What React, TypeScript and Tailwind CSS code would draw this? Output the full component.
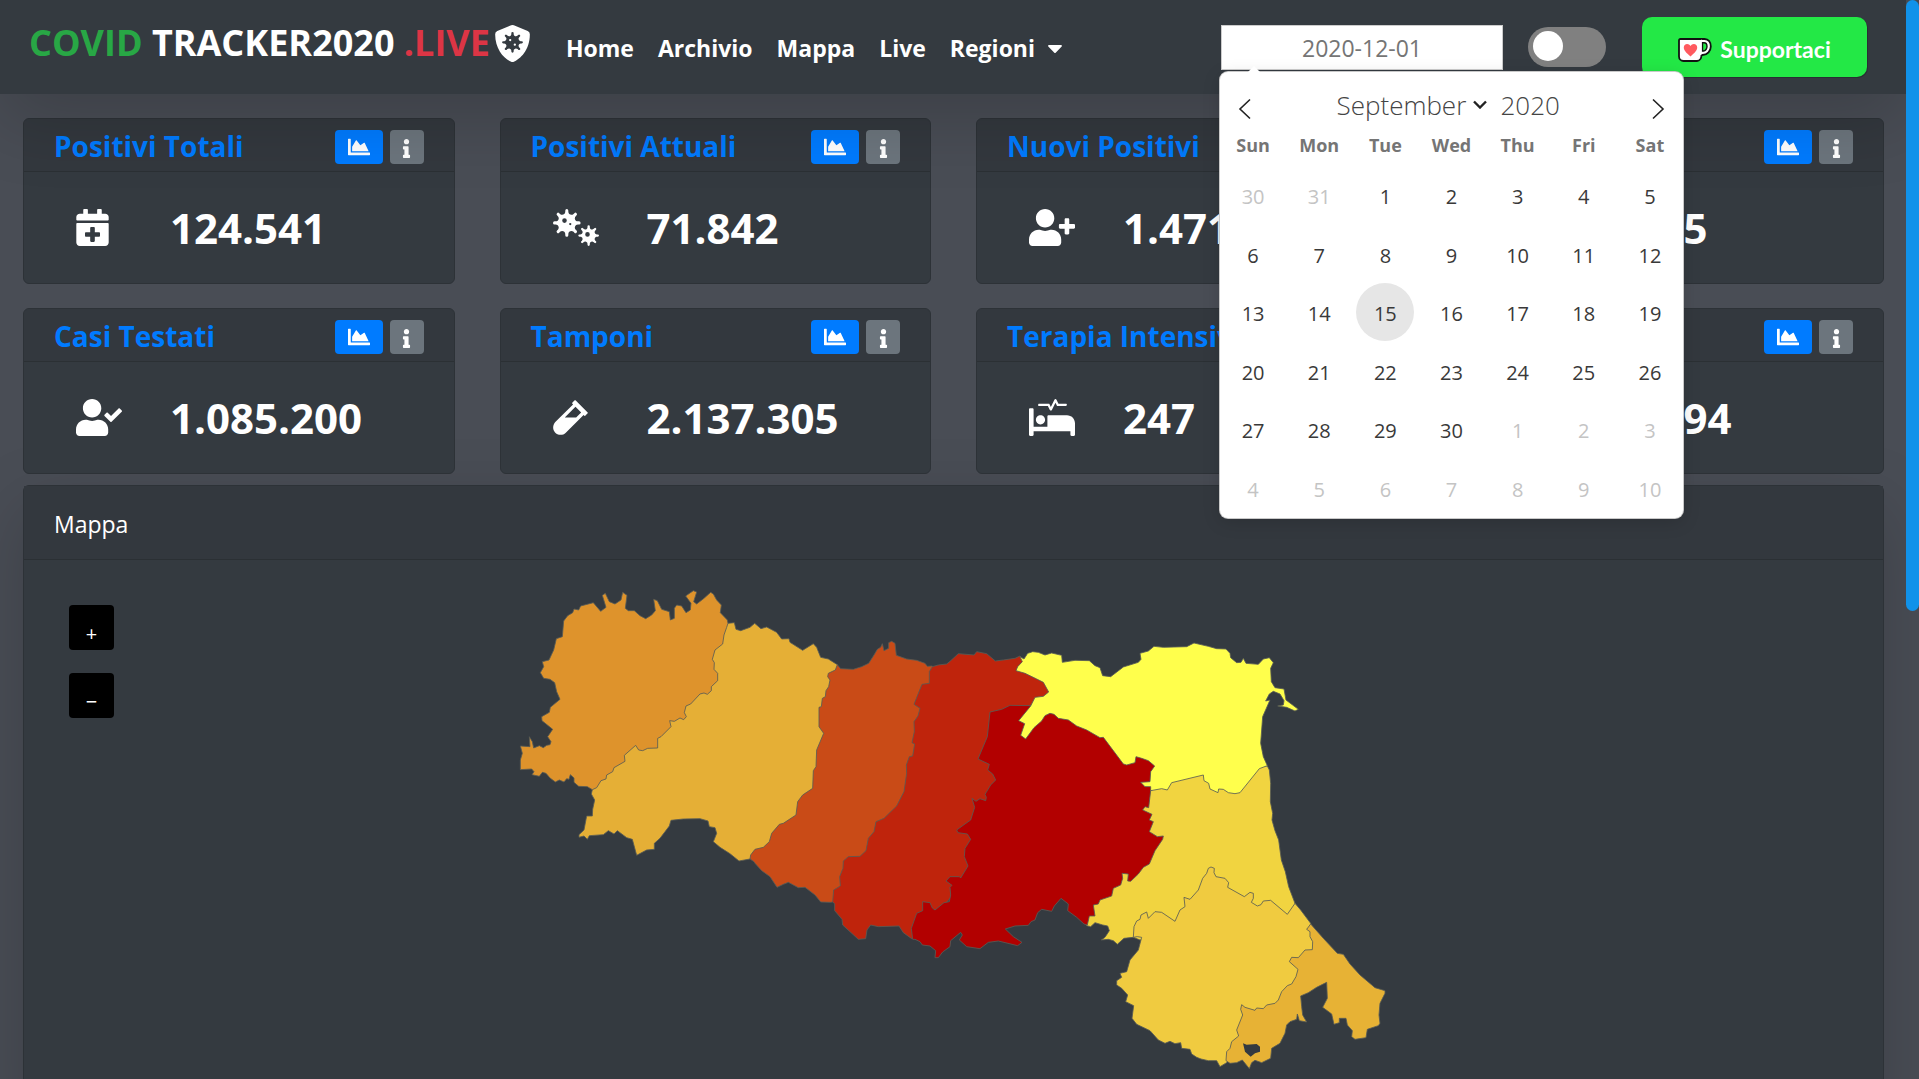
import React from "react";
import type { IconType } from "react-icons";
import {
  FaCalendarPlus,
  FaCaretDown,
  FaChartArea,
  FaHeart,
  FaInfo,
  FaProcedures,
  FaShieldVirus,
  FaUserCheck,
  FaUserPlus,
  FaVial,
  FaViruses,
} from "react-icons/fa";

type Stat = { title: string; value: string; icon: IconType; iconWidth: string };

const stats: Stat[] = [
  { title: "Positivi Totali", value: "124.541", icon: FaCalendarPlus, iconWidth: "w-[33px]" },
  { title: "Positivi Attuali", value: "71.842", icon: FaViruses, iconWidth: "w-[46px]" },
  { title: "Nuovi Positivi", value: "1.471", icon: FaUserPlus, iconWidth: "w-[46px]" },
  { title: "Deceduti", value: "5.805", icon: FaHeart, iconWidth: "w-[37px]" },
  { title: "Casi Testati", value: "1.085.200", icon: FaUserCheck, iconWidth: "w-[46px]" },
  { title: "Tamponi", value: "2.137.305", icon: FaVial, iconWidth: "w-[35px]" },
  { title: "Terapia Intensiva", value: "247", icon: FaProcedures, iconWidth: "w-[46px]" },
  { title: "Guariti", value: "46.894", icon: FaUserCheck, iconWidth: "w-[46px]" },
];

function StatCard({ title, value, icon: Icon, iconWidth }: Stat) {
  return (
    <section className="overflow-hidden rounded-md border border-[#2d3237] bg-[#343a40]">
      <div className="flex h-[53px] items-center justify-between border-b border-[#2b3034] bg-[#33383e] px-[30px]">
        <h3 className="pt-[2px] text-[28px] leading-8 font-bold whitespace-nowrap text-[#007bff]">{title}</h3>
        <div className="flex gap-[7px] pt-1">
          <button aria-label={"Grafico " + title} className="flex h-[34px] w-12 items-center justify-center rounded bg-[#007bff] text-[22px] text-white">
            <FaChartArea />
          </button>
          <button aria-label={"Informazioni " + title} className="flex h-[34px] w-[34px] items-center justify-center rounded bg-[#6c757d] pt-[3px] text-[19px] text-white">
            <FaInfo />
          </button>
        </div>
      </div>
      <div className="flex h-[111px] items-center pl-[52px] text-white">
        <span className="w-[94px]">
          <Icon className={"h-[37px] " + iconWidth} />
        </span>
        <span className="text-[42px] leading-none font-bold">{value}</span>
      </div>
    </section>
  );
}

const weekdays = ["Sun", "Mon", "Tue", "Wed", "Thu", "Fri", "Sat"];
const days = Array.from({ length: 42 }, (_, i) => {
  const offset = i - 1;
  if (offset < 1) return { n: 30 + i, muted: true };
  if (offset > 30) return { n: offset - 30, muted: true };
  return { n: offset, muted: false };
});
const weeks = Array.from({ length: 6 }, (_, w) => days.slice(w * 7, w * 7 + 7));

function Calendar() {
  return (
    <div className="absolute top-[47px] -left-px z-20 w-[463px] rounded-lg bg-white pb-px shadow-[0_0_0_1px_#c9c9c9,0_4px_18px_rgba(0,0,0,0.15)]">
      <span className="absolute -top-[6px] left-[27px] h-0 w-0 border-x-[7px] border-b-[7px] border-x-transparent border-b-white" />
      <div className="flex h-[54px] items-center justify-between px-[18px]">
        <button aria-label="Mese precedente" className="pt-5">
          <svg width="14" height="22" viewBox="0 0 14 22" fill="none" stroke="#222" strokeWidth="1.6">
            <path d="M12 1.5 2 11l10 9.500" />
          </svg>
        </button>
        <div className="flex items-center pt-3 font-light text-[#444]">
          <label className="relative flex items-center">
            <span className="sr-only">Mese</span>
            <select className="w-[158px] appearance-none bg-transparent text-[26px] leading-9" defaultValue="September">
              <option>September</option>
              <option>October</option>
            </select>
            <svg className="pointer-events-none absolute right-[8px]" width="14" height="9" viewBox="0 0 14 9" fill="none" stroke="#222" strokeWidth="2.400">
              <path d="m1 1.500 6 6 6-6" />
            </svg>
          </label>
          <input aria-label="Anno" defaultValue="2020" className="w-[72px] bg-transparent pl-[6px] text-[26px] leading-9" />
        </div>
        <button aria-label="Mese successivo" className="pt-5">
          <svg width="14" height="22" viewBox="0 0 14 22" fill="none" stroke="#222" strokeWidth="1.6">
            <path d="m2 1.500 10 9.500-10 9.500" />
          </svg>
        </button>
      </div>
      <table className="w-full table-fixed text-center">
        <thead>
          <tr className="h-10">
            {weekdays.map((d) => (
              <th key={d} className="p-0 pb-[2px] align-middle text-[18px] leading-6 font-bold text-[#757575]">{d}</th>
            ))}
          </tr>
        </thead>
        <tbody>
          {weeks.map((week, w) => (
            <tr key={w} className="h-[58px] odd:h-[59px]">
              {week.map((day, i) => (
                <td key={i} className="p-0 align-top">
                  <button
                    className={
                      "mx-auto block h-[58px] w-[58px] rounded-full pt-1 text-[20px] leading-6 " +
                      (day.muted ? "text-[#c4c4c4]" : "text-[#393939]") +
                      (day.n === 15 ? " bg-[#e6e6e6]" : "")
                    }
                  >
                    {day.n}
                  </button>
                </td>
              ))}
            </tr>
          ))}
        </tbody>
      </table>
    </div>
  );
}

function MugIcon() {
  return (
    <svg width="34" height="24" viewBox="0 0 34 24">
      <path d="M22 1h4.500c4 0 6.300 3.300 6.300 7.500s-3.300 8.500-8.300 8.500H22" fill="#fff" stroke="#111" strokeWidth="1.800" />
      <path d="M24.500 4.800h1.500c2 0 3 1.500 3 3.600s-1.500 4.600-3.500 4.600h-1z" fill="#23e846" stroke="#111" strokeWidth="1.400" />
      <path d="M1 2.500Q1 1 2.500 1H23.500v16.500c0 3-2 5.500-4.500 5.500H5.500C3 23 1 21 1 18.500z" fill="#fff" />
      <path d="M23.500 1H2.500Q1 1 1 2.500v16C1 21 3 23 5.500 23H19c2.500 0 4.500-2.500 4.500-6" fill="none" stroke="#111" strokeWidth="1.800" />
      <path d="M12.500 18.500C8 14.700 5.800 12.300 5.800 9.600 5.800 7.300 7.300 6 9.100 6c1.400 0 2.700.7 3.400 2 .7-1.300 2-2 3.400-2 1.800 0 3.300 1.300 3.300 3.600 0 2.700-2.200 5.100-6.700 8.900z" fill="#ff5a5f" />
    </svg>
  );
}

const links = ["Home", "Archivio", "Mappa", "Live"];

function Navbar() {
  return (
    <nav className="relative z-10 flex h-[94px] items-center bg-[#343a40] pr-[39px] pl-[29px] text-white shadow-[0_24px_72px_rgba(0,0,0,0.175)]">
      <a href="#" className="flex items-center gap-1 pb-2 text-[36px] leading-none font-bold whitespace-nowrap">
        <span>
          <span className="text-[#28a745]">COVID</span> TRACKER2020 <span className="text-[#dc3545]">.LIVE</span>
        </span>
        <FaShieldVirus className="text-[37px]" />
      </a>
      <div className="flex items-center gap-6 pt-[2px] pl-[35px] text-[23px] leading-8 font-bold">
        {links.map((l) => (
          <a key={l} href="#">{l}</a>
        ))}
        <a href="#" className="flex items-center gap-2">
          Regioni
          <FaCaretDown className="text-[24px]" />
        </a>
      </div>
      <div className="relative ml-auto">
        <input
          aria-label="Data"
          placeholder="2020-12-01"
          className="block h-[45px] w-[282px] border border-[#ccc] bg-white pt-[2px] text-center text-[23px] leading-8 placeholder:text-[#757575]"
        />
        <Calendar />
      </div>
      <label className="ml-[25px]">
        <span className="sr-only">Tema</span>
        <input type="checkbox" className="peer sr-only" />
        <span className="flex h-10 w-[78px] rounded-full bg-[#808080] pt-1 pl-[5px]">
          <span className="h-[30px] w-[30px] rounded-full bg-white" />
        </span>
      </label>
      <button className="ml-[36px] flex h-[60px] w-[225px] items-center justify-center gap-2 rounded-[10px] bg-[#23e846] pt-[5px] font-[Lato,sans-serif] text-[23px] font-bold text-white shadow-[1px_1px_0_rgba(0,0,0,0.2)]">
        <MugIcon />
        Supportaci
      </button>
    </nav>
  );
}

type Province = { name: string; fill: string; frame: string; points: string };

/* Each outline is digitised at three units per pixel; `frame` places its sheet on the map. */
const WEST = "translate(500 570) scale(0.33333)";
const CENTRE = "translate(720 600) scale(0.33333)";
const NORTHEAST = "translate(980 620) scale(0.33333)";
const SOUTHEAST = "translate(1060 740) scale(0.33333)";

const provinces: Province[] = [
  {
    name: "Ravenna",
    fill: "#f1d440",
    frame: SOUTHEAST,
    points:
      "622,78 628,90 632,130 631,185 638,220 636,240 645,272 656,300 664,360 676,395 686,440 705,490 690,540 450,560 240,600 220,592 192,595 172,613 160,602 145,598 124,600 135,592 148,572 143,558 128,555 105,548 92,560 80,557 60,500 200,350 220,150 260,100 500,80",
  },
  {
    name: "Forlì-Cesena",
    fill: "#f0cb40",
    frame: SOUTHEAST,
    points:
      "220,592 222,560 230,543 240,538 243,525 260,516 265,535 285,515 305,517 345,544 360,510 375,500 372,472 390,478 415,450 428,415 440,400 445,385 453,381 463,385 462,398 468,410 495,415 506,428 503,442 553,470 570,457 580,460 580,475 574,487 592,498 603,494 610,483 632,481 682,523 705,490 722,510 752,550 770,620 740,720 600,850 525,930 500,968 480,980 470,962 445,962 423,957 410,952 395,942 390,928 365,925 362,908 345,911 330,904 315,910 295,900 270,872 230,853 216,835 221,797 197,785 203,765 185,745 170,735 170,722 185,712 180,700 200,695 210,660 235,630 245,592 232,590",
  },
  {
    name: "Rimini",
    fill: "#e7b235",
    frame: SOUTHEAST,
    points:
      "752,552 740,568 750,575 750,590 758,605 757,629 735,630 715,653 695,652 688,665 714,688 708,710 695,732 682,737 665,755 655,780 645,790 620,795 610,806 590,804 585,811 555,802 545,794 542,808 548,825 530,870 536,888 515,905 510,925 500,935 498,962 510,970 530,968 547,960 568,986 575,968 585,961 605,968 632,955 635,925 660,910 675,880 680,855 690,845 710,838 712,822 718,842 740,846 728,825 725,800 722,768 745,758 770,742 800,727 802,775 788,802 815,822 822,853 838,848 838,835 858,835 862,855 877,872 875,890 885,898 918,893 922,868 955,857 960,850 957,825 960,790 975,760 975,752 945,743 900,705 870,672 850,643 832,640 790,595",
  },
  {
    name: "Reggio Emilia",
    fill: "#c94b17",
    frame: CENTRE,
    points:
      "352,194 362,206 400,208 425,200 446,190 462,165 472,148 482,142 487,131 492,152 506,145 506,128 515,124 525,130 529,166 560,177 590,181 615,190 622,199 637,198 660,230 620,450 500,720 400,800 380,890 344,905 331,907 302,906 285,885 255,862 235,863 205,847 190,853 171,862 150,830 125,812 105,790 102,785 90,777 80,750 220,560 260,230",
  },
  {
    name: "Modena",
    fill: "#bf240c",
    frame: CENTRE,
    points:
      "637,200 628,215 628,250 606,253 582,313 600,325 594,348 582,365 583,395 576,428 584,432 578,468 568,470 559,495 560,520 552,575 530,618 492,655 468,665 462,695 445,715 438,752 420,769 385,770 370,783 369,805 359,830 361,858 341,870 338,905 344,912 344,932 366,958 368,975 415,1018 437,1016 441,990 452,975 475,980 537,978 550,998 575,1016 600,1000 720,860 850,600 850,330 930,317 1005,276 960,200 906,174 900,168 885,175 850,180 826,183 800,161 770,155 762,165 715,161 690,184 680,192 655,195",
  },
  {
    name: "Bologna",
    fill: "#b20000",
    frame: CENTRE,
    points:
      "578,1018 574,985 590,940 608,932 608,905 630,908 637,924 645,930 672,908 688,905 692,885 690,862 696,856 678,843 690,830 718,830 722,834 744,798 733,770 735,745 752,718 742,702 714,698 710,690 735,672 752,660 764,622 756,595 768,604 780,596 797,602 799,592 795,583 812,555 827,540 818,522 803,510 808,493 774,477 802,410 810,336 845,328 870,316 932,317 1000,310 1150,370 1240,450 1320,480 1320,560 1292,572 1286,623 1275,620 1268,630 1296,643 1288,660 1300,665 1288,695 1312,710 1330,708 1328,718 1305,752 1288,792 1270,802 1255,822 1232,844 1223,843 1225,822 1206,820 1208,835 1202,855 1180,865 1175,888 1140,900 1135,912 1120,915 1125,948 1108,948 1102,975 1092,972 1070,952 1043,932 1045,912 1023,895 1003,918 995,934 965,928 953,938 945,960 933,965 925,976 885,978 856,987 880,1010 906,1027 893,1037 835,1023 805,1027 780,1046 740,1040 718,1020 727,1005 722,997 692,1022 690,1040 668,1056 655,1073 645,1073 647,1052 630,1038 607,1035 600,1025 585,1018",
  },
  {
    name: "Ferrara",
    fill: "#ffff4c",
    frame: NORTHEAST,
    points:
      "512,512 512,500 495,500 482,487 510,485 512,455 524,438 505,422 485,415 468,410 465,428 440,435 430,432 370,352 360,353 320,330 290,318 265,300 235,295 222,283 210,280 195,287 185,303 162,323 137,357 122,346 134,311 116,302 152,258 165,232 190,229 206,216 190,187 170,177 135,160 108,152 113,140 127,125 120,110 132,117 143,100 158,95 175,97 195,105 215,99 245,106 247,127 285,121 328,122 345,137 360,143 368,167 392,170 430,141 475,127 483,118 480,100 505,93 522,79 550,82 620,80 642,69 685,79 710,86 738,87 750,100 752,113 770,128 783,127 790,115 798,130 835,133 850,117 868,113 880,128 872,145 874,185 885,203 912,207 918,240 955,268 945,273 920,262 893,258 910,255 912,242 900,222 880,214 868,222 857,243 870,240 848,290 842,370 850,410 862,437 838,446 780,518 765,521 745,518 730,508 716,507 714,518 690,507 686,490 672,482 670,465 575,488 562,510 545,506",
  },
  {
    name: "Parma",
    fill: "#e5af36",
    frame: WEST,
    points:
      "277,659 300,600 540,350 600,230 684,160 703,158 708,178 722,182 750,172 764,160 783,176 800,171 830,187 845,207 867,206 870,217 908,241 940,221 950,232 962,262 985,267 1012,284 1006,300 985,310 983,320 990,330 986,350 978,362 976,380 967,385 964,410 957,412 957,470 971,490 950,540 948,590 940,602 938,655 908,675 893,695 888,735 850,760 838,763 815,790 808,815 790,832 765,838 752,855 750,867 717,873 690,851 660,832 640,815 650,790 645,773 628,770 624,753 600,746 550,747 513,751 508,768 480,805 463,820 463,838 440,840 410,856 397,808 380,803 352,782 342,792 325,782 310,794 268,797 262,808 252,798 237,802 237,794 252,780 260,738 277,738 278,718 284,690 274,672",
  },
  {
    name: "Piacenza",
    fill: "#de932c",
    frame: WEST,
    points:
      "61,528 67,550 61,570 61,599 95,597 102,605 96,614 118,619 127,607 138,610 150,624 166,636 178,630 192,636 200,626 207,628 211,614 222,624 222,637 236,649 262,650 277,659 290,653 303,632 318,627 320,615 338,605 342,593 375,574 373,556 407,526 416,540 428,542 443,535 473,534 473,505 483,500 513,470 509,452 523,454 540,444 551,449 559,440 553,428 558,408 572,402 600,372 612,369 622,373 634,362 634,350 653,332 653,310 642,298 643,278 637,268 645,240 668,222 672,195 680,172 684,160 682,150 661,128 664,105 650,90 640,72 632,67 612,85 590,102 581,95 590,66 580,62 557,78 573,100 571,120 558,128 545,108 530,105 523,115 523,145 511,150 508,125 485,118 472,92 461,88 466,122 455,135 437,146 420,137 403,122 385,122 376,115 381,76 368,67 363,90 345,102 328,95 316,70 307,76 318,112 302,124 280,98 242,108 236,120 222,117 218,128 203,137 191,153 187,200 169,206 161,240 147,270 127,275 131,290 121,308 131,325 150,328 164,338 170,365 180,388 151,412 148,427 125,440 126,452 158,478 143,500 153,515 150,524 140,526 130,533 118,527 101,534 97,515 88,500 90,530",
  },
];

function RegionMap() {
  return (
    <svg className="block w-full" viewBox="24 560 1859 560" role="img" aria-label="Mappa delle province">
      {provinces.map((p) => (
        <polygon key={p.name} points={p.points} transform={p.frame} fill={p.fill} stroke="#585c55" strokeWidth="2.500" strokeLinejoin="round" />
      ))}
      <polygon transform={SOUTHEAST} points="549,910 560,914 590,912 600,920 600,935 585,940 572,950 555,935" fill="#343a40" />
    </svg>
  );
}

export default function App() {
  return (
    <div className="relative h-screen overflow-hidden bg-[#494d55] pr-[13px] font-['Open_Sans',sans-serif]">
      <div className="absolute top-0 right-0 z-30 h-[611px] w-[13px] rounded-full bg-[#1192ea]" />
      <Navbar />
      <main className="pt-6 pr-[22px] pl-[23px]">
        <div className="grid grid-cols-4 gap-x-[45px] gap-y-6">
          {stats.map((s) => (
            <StatCard key={s.title} {...s} />
          ))}
        </div>
        <section className="mt-[11px] rounded-md border border-[#2d3237] bg-[#343a40] shadow-[0_24px_72px_rgba(0,0,0,0.175)]">
          <h2 className="flex h-[74px] items-center border-b border-[#2b3034] bg-[#33383e] px-[30px] pt-[3px] text-[23px] text-white">Mappa</h2>
          <div className="relative">
            <div className="absolute top-[45px] left-[45px] flex flex-col gap-[23px] text-[20px] text-white">
              <button aria-label="Ingrandisci" className="h-[45px] w-[45px] rounded bg-black pt-3 leading-none">+</button>
              <button aria-label="Riduci" className="h-[45px] w-[45px] rounded bg-black pt-3 leading-none">−</button>
            </div>
            <RegionMap />
          </div>
        </section>
      </main>
    </div>
  );
}
